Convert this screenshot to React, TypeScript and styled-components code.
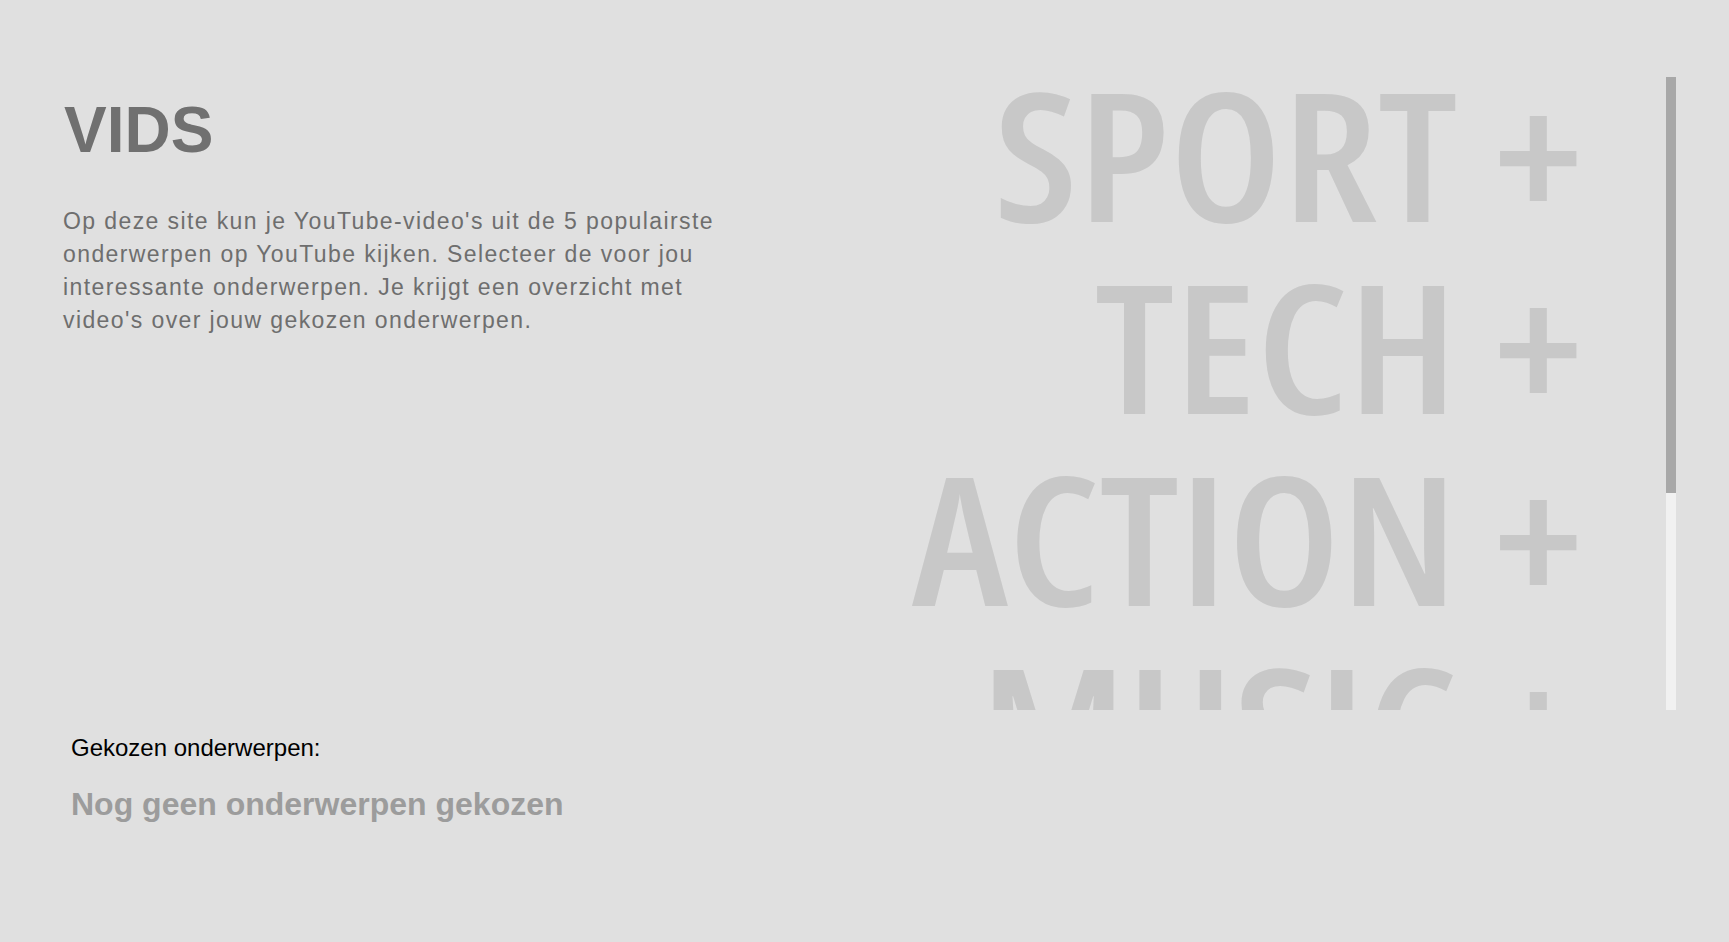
import React from "react";
import styled, { createGlobalStyle } from "styled-components";

const GlobalStyle = createGlobalStyle`
  html, body {
    margin: 0;
    padding: 0;
    background: #e0e0e0;
  }
  body {
    font-family: "Liberation Sans", Arial, sans-serif;
  }
`;

const Page = styled.div`
  width: 1729px;
  height: 942px;
  background: #e0e0e0;
  display: flex;
  flex-direction: column;
  padding-top: 77px;
  box-sizing: border-box;
  overflow: hidden;
`;

const TopSection = styled.section`
  display: flex;
  height: 633px;
  padding-right: 53px;
`;

const Intro = styled.div`
  flex: 0 0 auto;
  width: 665px;
  padding-left: 63px;
`;

const Title = styled.h1`
  margin: 16px 0 0 1px;
  font-family: "Liberation Sans", Arial, sans-serif;
  font-weight: 700;
  font-size: 64px;
  line-height: normal;
  color: #707070;
`;

const Description = styled.p`
  margin: 38px 0 0 0;
  font-family: "Liberation Sans", Arial, sans-serif;
  font-size: 23px;
  line-height: 33px;
  letter-spacing: 1.4px;
  color: #6e6e6e;
`;

const TopicList = styled.div`
  flex: 1 1 auto;
  height: 633px;
  overflow-y: auto;
  overflow-x: hidden;
  padding-right: 83px;
  text-align: right;
  scrollbar-width: none;

  &::-webkit-scrollbar {
    display: none;
  }
`;

const Topic = styled.div`
  font-family: "Open Sans", sans-serif;
  font-weight: 600;
  font-stretch: 75%;
  font-size: 180px;
  line-height: 151px;
  padding-bottom: 41px;
  color: #c8c8c8;
  white-space: nowrap;
  transform: scaleX(1.1);
  transform-origin: right center;
  cursor: pointer;
  user-select: none;
`;

const ScrollTrack = styled.div`
  flex: 0 0 10px;
  height: 633px;
  background: #f1f1f1;
`;

const ScrollThumb = styled.div`
  height: 416px;
  background: #a8a8a8;
`;

const Chosen = styled.section`
  padding: 24px 0 0 71px;
`;

const ChosenLabel = styled.div`
  font-family: "Liberation Sans", Arial, sans-serif;
  font-size: 24px;
  line-height: normal;
  color: #000000;
`;

const EmptyNote = styled.div`
  margin-top: 24px;
  font-family: "Liberation Sans", Arial, sans-serif;
  font-weight: 700;
  font-size: 32px;
  line-height: normal;
  color: #9c9c9c;
`;

const topics = ["SPORT", "TECH", "ACTION", "MUSIC", "GAMING"];

export default function App() {
  return (
    <>
      <GlobalStyle />
      <Page>
        <TopSection>
          <Intro>
            <Title>VIDS</Title>
            <Description>
              Op deze site kun je YouTube-video's uit de 5 populairste onderwerpen op YouTube
              kijken. Selecteer de voor jou interessante onderwerpen. Je krijgt een overzicht met
              video's over jouw gekozen onderwerpen.
            </Description>
          </Intro>
          <TopicList>
            {topics.map((t) => (
              <Topic key={t}>{t} +</Topic>
            ))}
          </TopicList>
          <ScrollTrack>
            <ScrollThumb />
          </ScrollTrack>
        </TopSection>
        <Chosen>
          <ChosenLabel>Gekozen onderwerpen:</ChosenLabel>
          <EmptyNote>Nog geen onderwerpen gekozen</EmptyNote>
        </Chosen>
      </Page>
    </>
  );
}
